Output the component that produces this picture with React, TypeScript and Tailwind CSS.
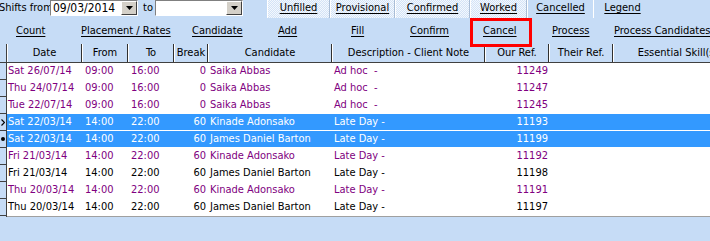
import React from 'react';

type Row = {
  date: string;
  from: string;
  to: string;
  brk: string;
  cand: string;
  desc: string;
  ref: string;
  tone: 'purple' | 'black' | 'sel';
  mark?: 'arrow' | 'dot';
};

const rows: Row[] = [
  { date: 'Sat 26/07/14', from: '09:00', to: '16:00', brk: '0', cand: 'Saika Abbas', desc: 'Ad hoc  -', ref: '11249', tone: 'purple' },
  { date: 'Thu 24/07/14', from: '09:00', to: '16:00', brk: '0', cand: 'Saika Abbas', desc: 'Ad hoc  -', ref: '11247', tone: 'purple' },
  { date: 'Tue 22/07/14', from: '09:00', to: '16:00', brk: '0', cand: 'Saika Abbas', desc: 'Ad hoc  -', ref: '11245', tone: 'purple' },
  { date: 'Sat 22/03/14', from: '14:00', to: '22:00', brk: '60', cand: 'Kinade Adonsako', desc: 'Late Day -', ref: '11193', tone: 'sel', mark: 'arrow' },
  { date: 'Sat 22/03/14', from: '14:00', to: '22:00', brk: '60', cand: 'James Daniel Barton', desc: 'Late Day -', ref: '11199', tone: 'sel', mark: 'dot' },
  { date: 'Fri 21/03/14', from: '14:00', to: '22:00', brk: '60', cand: 'Kinade Adonsako', desc: 'Late Day -', ref: '11192', tone: 'purple' },
  { date: 'Fri 21/03/14', from: '14:00', to: '22:00', brk: '60', cand: 'James Daniel Barton', desc: 'Late Day -', ref: '11198', tone: 'black' },
  { date: 'Thu 20/03/14', from: '14:00', to: '22:00', brk: '60', cand: 'Kinade Adonsako', desc: 'Late Day -', ref: '11191', tone: 'purple' },
  { date: 'Thu 20/03/14', from: '14:00', to: '22:00', brk: '60', cand: 'James Daniel Barton', desc: 'Late Day -', ref: '11197', tone: 'black' },
];

const toneClass = {
  purple: 'bg-white text-[#800080]',
  black: 'bg-white text-black',
  sel: 'bg-[#3399ff] text-white',
};

function Combo({ value, width }: { value: string; width: string }) {
  return (
    <div className={`flex h-[16px] ${width} border border-t-[#808080] border-l-[#808080] border-r-white border-b-white bg-white`}>
      <div className="flex-1 pl-[2px] text-[12px] leading-[14px] text-black">{value}</div>
      <div className="flex w-[16px] items-center justify-center border border-t-white border-l-white border-r-[#404040] border-b-[#404040] bg-[#d4d0c8]">
        <svg width="7" height="4" viewBox="0 0 7 4">
          <path d="M0 0h7L3.5 4z" fill="#000" />
        </svg>
      </div>
    </div>
  );
}

const tabs = [
  { label: 'Unfilled', w: 'w-[63px]', pat: true },
  { label: 'Provisional', w: 'w-[65px]', pat: true },
  { label: 'Confirmed', w: 'w-[75px]', pat: true },
  { label: 'Worked', w: 'w-[57px]', pat: true },
  { label: 'Cancelled', w: 'w-[66px]', pat: false },
  { label: 'Legend', w: 'w-[58px]', pat: false },
];

const links = [
  { label: 'Count', w: 'w-[65px]' },
  { label: 'Placement / Rates', w: 'w-[111px]' },
  { label: 'Candidate', w: 'w-[86px]' },
  { label: 'Add', w: 'w-[73px]' },
  { label: 'Fill', w: 'w-[59px]' },
  { label: 'Confirm', w: 'w-[73px]' },
  { label: 'Cancel', w: 'w-[69px]' },
  { label: 'Process', w: 'w-[62px]' },
  { label: 'Process Candidates', w: 'w-[110px]' },
];

const headers = [
  { label: 'Date', w: 'w-[75px]' },
  { label: 'From', w: 'w-[46px]' },
  { label: 'To', w: 'w-[46px]' },
  { label: 'Break', w: 'w-[34px]' },
  { label: 'Candidate', w: 'w-[124px]' },
  { label: 'Description - Client Note', w: 'w-[153px]' },
  { label: 'Our Ref.', w: 'w-[64px]' },
  { label: 'Their Ref.', w: 'w-[64px]' },
  { label: 'Essential Skill(s)', w: 'w-[130px]' },
];

export default function App() {
  return (
    <div
      className="relative h-[241px] w-[710px] overflow-hidden bg-[#c6dcf6] text-[11px] text-black"
      style={{ fontFamily: "Tahoma, 'DejaVu Sans Condensed', 'Liberation Sans', sans-serif" }}
    >
      {/* top: date range + tabs */}
      <div className="flex h-[18px] items-start">
        <div className="ml-[-1px] w-[51px] whitespace-nowrap leading-[15px]">Shifts from</div>
        <Combo value="09/03/2014" width="w-[88px]" />
        <div className="w-[17px] pl-[5px] leading-[15px]">to</div>
        <Combo value="" width="w-[88px]" />
        <div className="ml-[24px] flex h-[18px]">
          {tabs.map((t) => (
            <div
              key={t.label}
              className={`${t.w} flex h-[18px] justify-center border-l border-l-white pt-[1px] leading-[14px] ${
                t.pat
                  ? 'bg-[repeating-conic-gradient(#d3e3f7_0%_25%,#f4f8fd_0%_50%)] bg-[length:2px_2px] border-r border-r-[#a9bdd6]'
                  : 'border-l-transparent'
              }`}
            >
              <span className="underline underline-offset-[2px]">{t.label}</span>
            </div>
          ))}
        </div>
      </div>

      {/* action links */}
      <div className="flex h-[26px] items-center pl-[16px]">
        {links.map((l) => (
          <div key={l.label} className={`${l.w} shrink-0 whitespace-nowrap`}>
            <span className="underline underline-offset-[2px]">{l.label}</span>
          </div>
        ))}
      </div>

      {/* grid */}
      <div className="flex">
        <div className="w-[7px] shrink-0 border-r border-[#404040] bg-[#c6dcf6]">
          <div className="h-[19px] border-b border-[#404040]" />
          {rows.map((r, i) => (
            <div key={i} className="flex h-[17px] items-center justify-end border-b border-[#404040] pr-[1px]">
              {r.mark === 'arrow' && (
                <svg width="4" height="7" viewBox="0 0 4 7">
                  <path d="M0.5 0.5L3.5 3.5L0.5 6.5" fill="none" stroke="#000" strokeWidth="1.2" />
                </svg>
              )}
              {r.mark === 'dot' && <div className="h-[4px] w-[4px] rounded-full bg-black" />}
            </div>
          ))}
        </div>

        <div className="flex-1">
          <div className="flex h-[19px] border-b border-[#404040] bg-[#c6dcf6]">
            {headers.map((h) => (
              <div
                key={h.label}
                className={`${h.w} shrink-0 overflow-hidden whitespace-nowrap border-l border-r border-l-white border-r-[#303030] text-center leading-[18px]`}
              >
                {h.label}
              </div>
            ))}
          </div>
          <div className="border-b border-[#a0a0a0] bg-white">
            {rows.map((r, i) => (
              <div key={i} className={`flex h-[17px] border-b border-white leading-[16px] ${toneClass[r.tone]}`}>
                <div className="w-[75px] shrink-0 pl-[1px]">{r.date}</div>
                <div className="w-[46px] shrink-0 pl-[3px]">{r.from}</div>
                <div className="w-[46px] shrink-0 pl-[3px]">{r.to}</div>
                <div className="w-[34px] shrink-0 pr-[2px] text-right">{r.brk}</div>
                <div className="w-[124px] shrink-0 whitespace-nowrap pl-[2px]">{r.cand}</div>
                <div className="w-[153px] shrink-0 whitespace-pre pl-[2px]">{r.desc}</div>
                <div className="w-[64px] shrink-0 pr-[1px] text-right">{r.ref}</div>
                <div className="flex-1" />
              </div>
            ))}
          </div>
        </div>
      </div>

      {/* highlight drawn over the Cancel link */}
      <div className="pointer-events-none absolute left-[470px] top-[18px] h-[29px] w-[62px] border-[3px] border-[#ff0000]" />
    </div>
  );
}
